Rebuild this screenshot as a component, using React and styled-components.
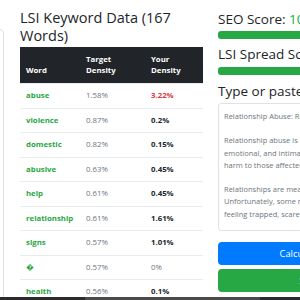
import React from "react";
import styled, { createGlobalStyle } from "styled-components";

const GlobalStyle = createGlobalStyle`
  html, body {
    margin: 0;
    padding: 0;
    background: #fff;
    overflow: hidden;
    width: 300px;
    height: 300px;
  }
  body {
    font-family: "Open Sans", "DejaVu Sans", sans-serif;
    color: #212529;
  }
`;

const Row = styled.div`
  display: flex;
  gap: 15px;
  margin-left: -196px;
  width: 800px;
`;

const SideCol = styled.div`
  width: 200px;
  flex: none;
  padding-top: 29px;
`;

const SideCard = styled.div`
  height: 300px;
  border: 1px solid #dee2e6;
  border-radius: 4px;
  box-sizing: border-box;
`;

const Col = styled.div`
  width: 183px;
  flex: none;
  padding-top: ${(p) => p.$top || 11}px;
  margin-left: ${(p) => p.$shift || 0}px;
`;

const Heading = styled.h3`
  margin: 0 0 ${(p) => p.$mb || 4}px;
  font-size: ${(p) => p.$size || 13.5}px;
  line-height: ${(p) => p.$lh || 16}px;
  font-weight: 500;
  color: #212529;
  white-space: ${(p) => (p.$nowrap ? "nowrap" : "normal")};
`;

const Good = styled.span`
  color: #28a745;
`;

const Table = styled.table`
  width: 183px;
  table-layout: fixed;
  border-collapse: collapse;
  font-size: 7.8px;
  line-height: 11.5px;
`;

const Th = styled.th`
  box-sizing: border-box;
  background: #212529;
  color: #fff;
  font-weight: 700;
  text-align: left;
  vertical-align: bottom;
  padding: 6.5px 6px;
  width: ${(p) => p.$w}px;
`;

const Td = styled.td`
  padding: 6px 6px;
  border-top: 1px solid #e9ecef;
  white-space: nowrap;
  overflow: hidden;
  color: ${(p) => p.$color || "#212529"};
  font-weight: ${(p) => (p.$bold ? 700 : 400)};
`;

const Bar = styled.div`
  height: 8px;
  border-radius: 3px;
  background: #28a745;
  margin-bottom: ${(p) => p.$mb}px;
`;

const TextBox = styled.textarea`
  display: block;
  width: 183px;
  height: 128px;
  box-sizing: border-box;
  margin: 0;
  padding: 6px 5px 4px;
  border: 1px solid #dee2e6;
  border-radius: 3px;
  font-family: "Open Sans", "DejaVu Sans", sans-serif;
  font-size: 7.5px;
  line-height: 12.2px;
  color: #6c757d;
  resize: none;
  overflow: hidden;
  white-space: pre;
  outline: none;
`;

const Button = styled.button`
  display: block;
  width: 183px;
  height: 23px;
  margin-top: ${(p) => p.$mt}px;
  border: none;
  border-radius: 4px;
  background: ${(p) => p.$bg};
  color: #fff;
  font-family: "Open Sans", "DejaVu Sans", sans-serif;
  font-size: 9.4px;
  padding: 0;
`;

const ScrollStrip = styled.div`
  position: fixed;
  left: 0;
  right: 0;
  bottom: 0;
  height: 3px;
  background: #2b2b2b;
  display: flex;
`;

const Thumb = styled.div`
  margin-left: 85px;
  width: 175px;
  background: #4a4a4a;
`;

const rows = [
  ["abuse", "1.58%", "3.22%", "#dc3545", true],
  ["violence", "0.87%", "0.2%", "#212529", true],
  ["domestic", "0.82%", "0.15%", "#212529", true],
  ["abusive", "0.63%", "0.45%", "#212529", true],
  ["help", "0.61%", "0.45%", "#212529", true],
  ["relationship", "0.61%", "1.61%", "#212529", true],
  ["signs", "0.57%", "1.01%", "#212529", true],
  ["\uFFFD", "0.57%", "0%", "#6c757d", false],
  ["health", "0.56%", "0.1%", "#212529", true],
  ["partner", "0.52%", "0.3%", "#212529", true],
];

const article = [
  "Relationship Abuse: Recognizing the Signs and Getting Help",
  "",
  "Relationship abuse is a serious issue that affects many people around the world. It can take",
  "emotional, and intimate partner violence, and it can cause lasting",
  "harm to those affected by it.",
  "",
  "Relationships are meant to be a source of love and support.",
  "Unfortunately, some relationships become abusive, leaving one partner",
  "feeling trapped, scared, and alone.",
  "",
  "Abuse can happen to anyone.",
].join("\n");

export default function App() {
  return (
    <>
      <GlobalStyle />
      <Row>
        <SideCol>
          <SideCard />
        </SideCol>
        <Col $shift={1} $top={9}>
          <Heading $size={14.5} $lh={18} $mb={2}>
            LSI Keyword Data (167 Words)
          </Heading>
          <Table>
            <thead>
              <tr>
                <Th $w={60}>Word</Th>
                <Th $w={65}>Target Density</Th>
                <Th $w={58}>Your Density</Th>
              </tr>
            </thead>
            <tbody>
              {rows.map(([word, target, yours, color, bold]) => (
                <tr key={word}>
                  <Td $color="#28a745" $bold>
                    {word}
                  </Td>
                  <Td $color="#6c757d">{target}</Td>
                  <Td $color={color} $bold={bold}>
                    {yours}
                  </Td>
                </tr>
              ))}
            </tbody>
          </Table>
        </Col>
        <Col>
          <Heading $nowrap>
            SEO Score: <Good>100</Good>
          </Heading>
          <Bar $mb={7} />
          <Heading $nowrap $mb={5}>
            LSI Spread Score: <Good>92</Good>
          </Heading>
          <Bar $mb={8} />
          <Heading $nowrap>Type or paste your content</Heading>
          <TextBox readOnly wrap="off" value={article} />
          <Button $bg="#007bff" $mt={11}>
            Calculate SEO
          </Button>
          <Button $bg="#28a745" $mt={4}>
            Save
          </Button>
        </Col>
      </Row>
      <ScrollStrip>
        <Thumb />
      </ScrollStrip>
    </>
  );
}
